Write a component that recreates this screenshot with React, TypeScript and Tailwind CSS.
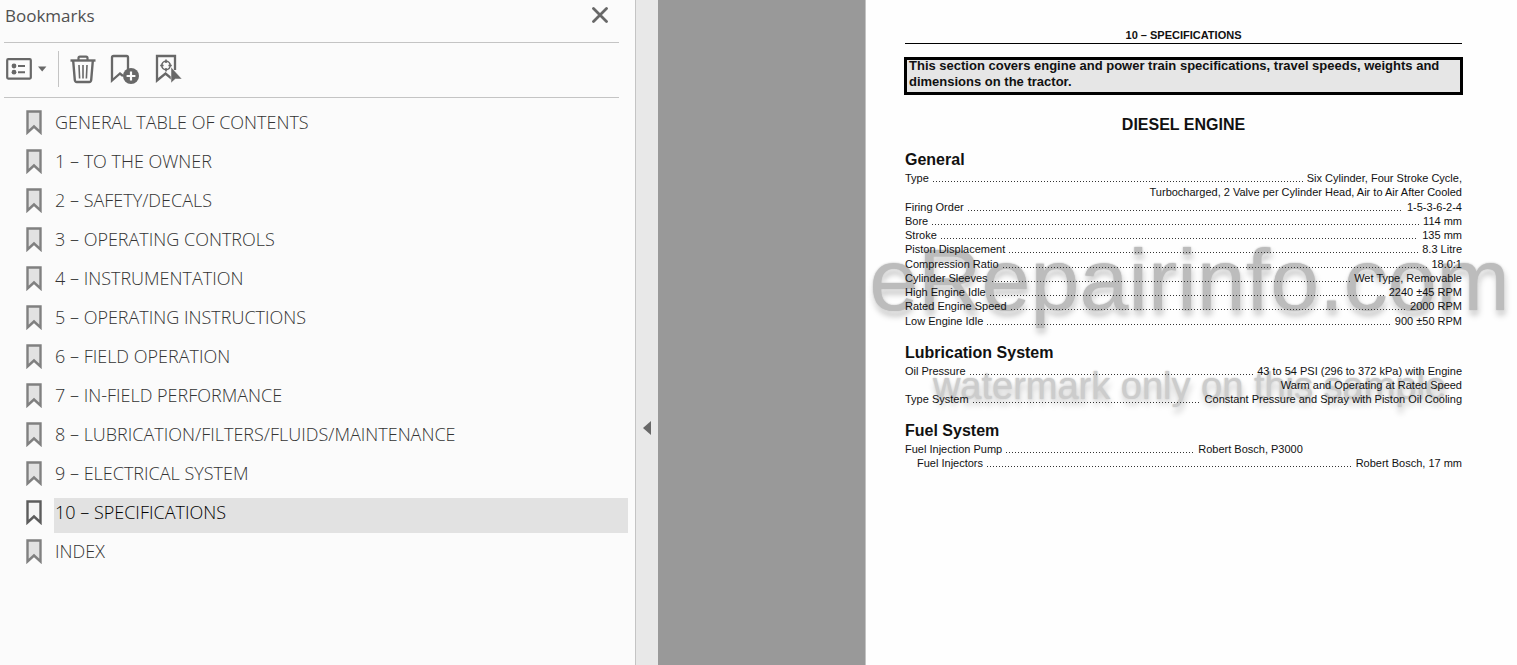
import React, { useState } from 'react'
import clsx from 'clsx'

type SpecRow = {
  label?: string
  value: string
  indent?: boolean
  short?: boolean
}

const bookmarks = [
  'GENERAL TABLE OF CONTENTS',
  '1 – TO THE OWNER',
  '2 – SAFETY/DECALS',
  '3 – OPERATING CONTROLS',
  '4 – INSTRUMENTATION',
  '5 – OPERATING INSTRUCTIONS',
  '6 – FIELD OPERATION',
  '7 – IN-FIELD PERFORMANCE',
  '8 – LUBRICATION/FILTERS/FLUIDS/MAINTENANCE',
  '9 – ELECTRICAL SYSTEM',
  '10 – SPECIFICATIONS',
  'INDEX',
]

const general: SpecRow[] = [
  { label: 'Type', value: 'Six Cylinder, Four Stroke Cycle,' },
  { value: 'Turbocharged, 2 Valve per Cylinder Head, Air to Air After Cooled' },
  { label: 'Firing Order', value: '1-5-3-6-2-4' },
  { label: 'Bore', value: '114 mm' },
  { label: 'Stroke', value: '135 mm' },
  { label: 'Piston Displacement', value: '8.3 Litre' },
  { label: 'Compression Ratio', value: '18.0:1' },
  { label: 'Cylinder Sleeves', value: 'Wet Type, Removable' },
  { label: 'High Engine Idle', value: '2240 ±45 RPM' },
  { label: 'Rated Engine Speed', value: '2000 RPM' },
  { label: 'Low Engine Idle', value: '900 ±50 RPM' },
]

const lubrication: SpecRow[] = [
  { label: 'Oil Pressure', value: '43 to 54 PSI (296 to 372 kPa) with Engine' },
  { value: 'Warm and Operating at Rated Speed' },
  { label: 'Type System', value: 'Constant Pressure and Spray with Piston Oil Cooling' },
]

const fuel: SpecRow[] = [
  { label: 'Fuel Injection Pump', value: 'Robert Bosch, P3000', short: true },
  { label: 'Fuel Injectors', value: 'Robert Bosch, 17 mm', indent: true },
]

const BookmarkIcon = ({ active }: { active: boolean }) => (
  <svg width="16" height="25" viewBox="0 0 16 25" className="shrink-0" aria-hidden="true">
    <path
      d="M1.5 1.5h13v21l-6.5-6-6.5 6z"
      fill={active ? '#f4f4f4' : '#e2e2e2'}
      stroke={active ? '#5c5c5c' : '#808080'}
      strokeWidth="2.4"
    />
  </svg>
)

const OptionsIcon = () => (
  <svg width="41" height="22" viewBox="0 0 41 22" aria-hidden="true">
    <rect x="1.2" y="1.2" width="23.6" height="19.4" rx="1" fill="none" stroke="#686868" strokeWidth="2.2" />
    <circle cx="8" cy="8" r="2.4" fill="#686868" />
    <circle cx="8" cy="14.2" r="2.4" fill="#686868" />
    <path d="M12 8h7M12 14.2h7" stroke="#686868" strokeWidth="2" />
    <path d="M32 8.5h8.4l-4.2 5z" fill="#686868" />
  </svg>
)

const TrashIcon = () => (
  <svg width="26" height="29" viewBox="0 0 26 29" fill="none" stroke="#686868" aria-hidden="true">
    <path d="M0.5 5.5h25" strokeWidth="2.4" />
    <path d="M8.5 5V3q0-1.4 1.4-1.4h6.2q1.4 0 1.4 1.4v2" strokeWidth="2.2" />
    <path d="M3.2 6l1.6 19q.2 2 2 2h12.4q1.8 0 2-2L22.8 6" strokeWidth="2.4" />
    <path d="M9 10l.6 13.5M13 10v13.5M17 10l-.6 13.5" strokeWidth="1.6" />
  </svg>
)

const AddBookmarkIcon = () => (
  <svg width="29" height="30" viewBox="0 0 29 30" aria-hidden="true">
    <path d="M13 22L10 19.5 2 26.5V3.6Q2 2 3.6 2h13Q18 2 18 3.6V16" fill="none" stroke="#686868" strokeWidth="2.3" />
    <circle cx="21" cy="22" r="8" fill="#686868" />
    <path d="M21 17.6v8.8M16.6 22h8.8" stroke="#fbfbfb" strokeWidth="2.2" />
  </svg>
)

const FindBookmarkIcon = () => (
  <svg width="27" height="30" viewBox="0 0 27 30" fill="none" aria-hidden="true">
    <path d="M20 16V2H2v24.5l8.5-7 6 5" stroke="#686868" strokeWidth="2.3" />
    <circle cx="11" cy="11.5" r="4.2" stroke="#686868" strokeWidth="1.6" />
    <path d="M11 5.6v3.4M11 14v3.4M5.2 11.5h3.4M13.4 11.5h3.4" stroke="#686868" strokeWidth="1.6" />
    <path d="M16 13v16l4.4-4h6.6z" fill="#686868" stroke="#fbfbfb" strokeWidth="0.5" />
  </svg>
)

const SpecSection = ({ title, rows, className }: { title: string; rows: SpecRow[]; className?: string }) => (
  <section className="mb-[15px]">
    <h3 className="text-base leading-5 font-bold">{title}</h3>
    <dl className={clsx('mt-px grid auto-rows-fr text-[11px] leading-[14px]', className)}>
      {rows.map((row) => (
        <div
          key={row.value}
          className={clsx('flex items-baseline', row.indent && 'pl-3', row.short && 'w-5/7')}
        >
          {row.label ? (
            <>
              <dt>{row.label}</dt>
              <span className="mx-1 h-px flex-1 bg-[repeating-linear-gradient(90deg,#333_0_1px,transparent_1px_3px)]" />
            </>
          ) : (
            <dt className="flex-1" />
          )}
          <dd>{row.value}</dd>
        </div>
      ))}
    </dl>
  </section>
)

const App = () => {
  const [selected, setSelected] = useState('10 – SPECIFICATIONS')
  const [panelOpen, setPanelOpen] = useState(true)

  return (
    <div className="flex min-h-screen w-full bg-[#999999]">
      {panelOpen && (
        <aside className="w-[635px] shrink-0 bg-[#fbfbfb] font-['Open_Sans',sans-serif] text-[#505050]">
          <div className="mr-4 ml-1 flex h-[43px] items-start justify-between border-b border-[#c4c4c4] pt-1 pl-px">
            <h2 className="text-[17px] leading-6">Bookmarks</h2>
            <button
              type="button"
              aria-label="Close"
              className="mr-[9px] flex h-[22px] w-5 items-center justify-center"
              onClick={() => setPanelOpen(false)}
            >
              <svg width="16" height="16" viewBox="0 0 16 16" aria-hidden="true">
                <path d="M1.5 1.5l13 13M14.5 1.5l-13 13" stroke="#686868" strokeWidth="2.8" strokeLinecap="round" />
              </svg>
            </button>
          </div>
          <div className="mr-4 ml-1 flex h-[55px] items-center border-b border-[#c4c4c4] pb-[2px] pl-[2px]">
            <button type="button" aria-label="Options">
              <OptionsIcon />
            </button>
            <span className="ml-[11px] h-9 w-px bg-[#c4c4c4]" />
            <button type="button" aria-label="Delete bookmark" className="ml-[11px]">
              <TrashIcon />
            </button>
            <button type="button" aria-label="New bookmark" className="ml-[14px]">
              <AddBookmarkIcon />
            </button>
            <button type="button" aria-label="Find current bookmark" className="ml-4">
              <FindBookmarkIcon />
            </button>
          </div>
          <nav className="mr-[7px] ml-[26px] flex flex-col gap-1 pt-[10px] text-[#333333]">
            {bookmarks.map((name) => (
              <a
                key={name}
                href="#page"
                onClick={() => setSelected(name)}
                className="flex h-[35px] items-start gap-3"
              >
                <span className="pt-[2px]">
                  <BookmarkIcon active={name === selected} />
                </span>
                <span
                  className={clsx(
                    'h-full flex-1 pl-px text-[18px] leading-7 font-light',
                    name === selected && 'bg-[#e2e2e2] text-black'
                  )}
                >
                  {name}
                </span>
              </a>
            ))}
          </nav>
        </aside>
      )}
      <button
        type="button"
        aria-label="Toggle bookmarks panel"
        onClick={() => setPanelOpen((v) => !v)}
        className="flex w-[23px] shrink-0 justify-center border-l border-[#c4c4c4] bg-[#e8e8e8] pt-[421px]"
      >
        <svg width="8" height="14" viewBox="0 0 8 14" aria-hidden="true">
          <path d="M8 0v14L0 7z" fill="#686868" />
        </svg>
      </button>
      <main
        id="page"
        className="relative isolate ml-[207px] flex-1 border-l border-[#c4c4c4] bg-[#fefefe] pr-[55px] pl-[39px] font-['Liberation_Sans',Arial,sans-serif] text-[#111111]"
      >
        <p className="mt-7 border-b border-black pb-px text-center text-[11px] leading-[14px] font-bold">
          10 – SPECIFICATIONS
        </p>
        <p className="-mx-px mt-[13px] bg-[#e6e6e6] pt-px pb-[5px] pl-[5px] text-[13px] leading-4 font-bold outline-3 -outline-offset-3 outline-black">
          This section covers engine and power train specifications, travel speeds, weights and dimensions on the
          tractor.
        </p>
        <h1 className="mt-5 mb-[15px] text-center text-base leading-5 font-bold">DIESEL ENGINE</h1>
        <SpecSection title="General" rows={general} className="min-h-[157px]" />
        <SpecSection title="Lubrication System" rows={lubrication} />
        <SpecSection title="Fuel System" rows={fuel} />

        {/* watermark sits behind the page text */}
        <div className="pointer-events-none absolute inset-x-0 top-[230px] -z-10 pr-1 text-center whitespace-nowrap">
          <p className="text-[88px] leading-[100px] text-[#bcbcbc] [text-shadow:0_0_2px_#b4b4b4,0_0_5px_#ffffff,1px_5px_6px_#00000040]">
            eRepairinfo.com
          </p>
          <p className="mt-[34px] text-[38px] leading-[44px] text-[#cccccc] [text-shadow:0_0_2px_#c4c4c4,1px_6px_6px_#00000038]">
            watermark only on this sample
          </p>
        </div>
      </main>
    </div>
  )
}

export default App
